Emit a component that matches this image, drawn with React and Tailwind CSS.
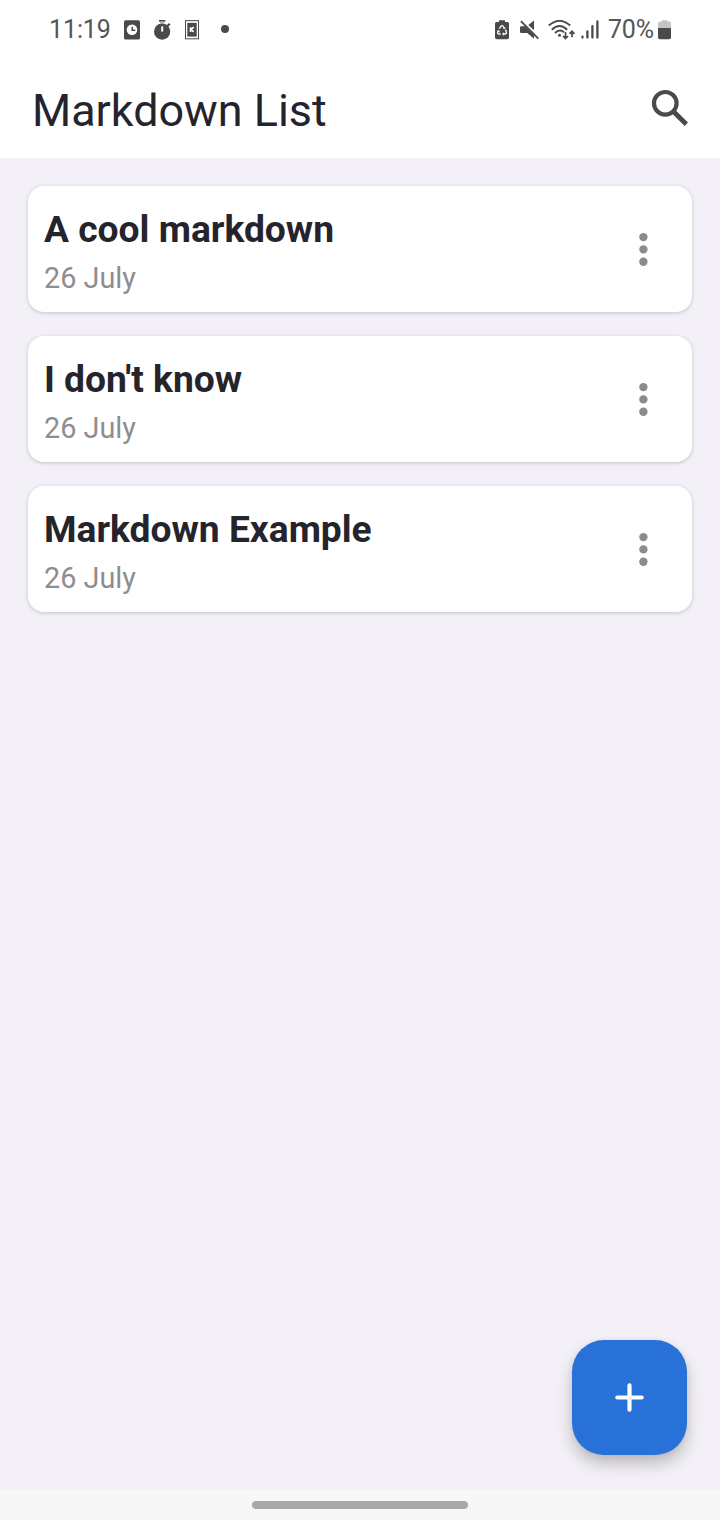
const notes = [
  { title: 'A cool markdown', date: '26 July' },
  { title: "I don't know", date: '26 July' },
  { title: 'Markdown Example', date: '26 July' },
];

function ClockCardIcon() {
  return (
    <svg className="ml-[13px] h-5 w-4 shrink-0" viewBox="0 0 16 20" fill="none">
      <rect y="0.3" width="16" height="19.2" rx="1.6" fill="#4a4a4c" />
      <circle cx="8" cy="9.8" r="5.3" fill="#fff" />
      <path d="M8.2 6.7v3.5h3.1" stroke="#4a4a4c" strokeWidth="1.5" />
    </svg>
  );
}

function StopwatchIcon() {
  return (
    <svg className="ml-[14px] h-5 w-[17px] shrink-0" viewBox="0 0 17 20" fill="none">
      <path d="M5 .8h6.4" stroke="#4a4a4c" strokeWidth="1.6" />
      <path d="M6 2.8h4.4" stroke="#a4a4a6" strokeWidth="1.2" />
      <path d="M13 6.4l2.8-2.6" stroke="#4a4a4c" strokeWidth="2.2" />
      <circle cx="8.1" cy="11.6" r="8.1" fill="#4a4a4c" />
      <path d="M8.2 6.4v5.2" stroke="#fff" strokeWidth="2" />
    </svg>
  );
}

function KCardIcon() {
  return (
    <svg className="ml-[14px] h-5 w-[14px] shrink-0" viewBox="0 0 14 20" fill="none">
      <rect x="0.5" y="0.6" width="13" height="18.2" stroke="#4a4a4c" />
      <rect x="2.3" y="2.8" width="9.4" height="13.8" fill="#4a4a4c" />
      <path d="M5.5 7.2v4.7M8.7 7.2L6 9.6l2.7 2.3" stroke="#fff" strokeWidth="1.6" />
    </svg>
  );
}

function RecycleBatteryIcon() {
  return (
    <svg className="h-5 w-[14px] shrink-0" viewBox="0 0 14 20" fill="none">
      <path d="M4 .2h6v1.7h2.4A1.6 1.6 0 0 1 14 3.5v14a1.8 1.8 0 0 1-1.8 1.8H1.8A1.8 1.8 0 0 1 0 17.5v-14a1.6 1.6 0 0 1 1.6-1.6H4z" fill="#4a4a4c" />
      <path d="M4.3 8.7L6 6.2q1-1.1 2 0l.9 1.4M10.3 9.5l1.2 2.5q.3 1.7-1.3 2H8M5.6 14H3.9q-1.7-.3-1.2-1.9l.8-1.5" stroke="#fff" strokeWidth="1.3" />
      <path d="M7.7 8.5l2.4.6.4-2.4zM8.8 12.2L7 14l1.8 1.7zM1.9 10.9l2.4-.7.6 2.3z" fill="#fff" />
    </svg>
  );
}

function MuteIcon() {
  return (
    <svg className="ml-[11px] h-5 w-[19px] shrink-0" viewBox="0 0 19 20" fill="none">
      <path d="M1.2 6.3H5.2L14 15.2v3.6L7.3 13H1.2Q0 13 0 11.8V7.5Q0 6.3 1.2 6.3z" fill="#4a4a4c" />
      <path d="M8.4 5L14 .4v9.9z" fill="#4a4a4c" />
      <path d="M.9 1.2L18.3 18.6" stroke="#4a4a4c" strokeWidth="1.9" />
    </svg>
  );
}

function WifiIcon() {
  return (
    <svg className="ml-[9px] h-5 w-7 shrink-0" viewBox="0 0 28 20" fill="none">
      <g stroke="#4a4a4c" strokeWidth="2">
        <path d="M.8 5.6Q11.5-4 22.2 5.6" />
        <path d="M3.8 9.7Q11.5 2.4 19.2 9.7" />
        <path d="M7 13Q11.5 8.6 16 12.2" />
        <path d="M17.5 12v6.6M15 16l2.5 2.6L20 16M24 17.2v-6M21.5 13.8l2.5-2.6 2.5 2.6" strokeWidth="1.7" />
      </g>
      <circle cx="11.5" cy="15.2" r="1.5" fill="#4a4a4c" />
    </svg>
  );
}

function SignalIcon() {
  return (
    <svg className="ml-[5px] h-5 w-[18px] shrink-0" viewBox="0 0 18 20" fill="none" stroke="#4a4a4c" strokeWidth="2.3" strokeLinecap="round">
      <path d="M1.5 16.7v.9M6.4 11.4v6.2M11.4 6.2v11.4M16.4 1.5v16.1" />
    </svg>
  );
}

function BatteryIcon() {
  return (
    <svg className="ml-[4px] h-5 w-[14px] shrink-0" viewBox="0 0 14 20">
      <path d="M4 .3h5.5v1.3h2.1q1.4.6 1.4 2V9H0V3.6q0-1.4 1.4-2H4z" fill="#c4c4c8" />
      <path d="M0 8h13v9.4q0 1.8-1.8 1.8H1.8Q0 19.2 0 17.4z" fill="#4a4a4c" />
    </svg>
  );
}

function StatusBar() {
  return (
    <div className="flex h-[60px] items-center justify-between pl-[49px] pr-[48px] text-[25px] leading-[30px] text-[#555557]">
      <div className="flex items-center">
        <span className="w-[62px] whitespace-nowrap tracking-[-0.1px]">11:19</span>
        <ClockCardIcon />
        <StopwatchIcon />
        <KCardIcon />
        <span className="mb-0.5 ml-[22px] size-2 rounded-full bg-[#4a4a4c]" />
      </div>
      <div className="flex items-center">
        <RecycleBatteryIcon />
        <MuteIcon />
        <WifiIcon />
        <SignalIcon />
        <span className="ml-[9px] w-[46px] whitespace-nowrap tracking-[-0.2px]">70%</span>
        <BatteryIcon />
      </div>
    </div>
  );
}

function NoteCard({ note }) {
  return (
    <article className="flex h-[126px] items-center justify-between rounded-2xl bg-white pl-4 pr-[44px] shadow-[0_1px_4px_rgba(0,0,0,0.2)]">
      <div className="pt-[9px]">
        <h2 className="whitespace-nowrap text-[37.2px] font-bold leading-[49px] text-[#25242c]">{note.title}</h2>
        <p className="text-[28.8px] leading-[48px] text-[#8e8d91]">{note.date}</p>
      </div>
      <button aria-label="Note options">
        <svg className="h-[34px] w-[9px]" viewBox="0 0 9 34" fill="#8b8a8f">
          <circle cx="4.4" cy="5.1" r="4.2" />
          <circle cx="4.4" cy="17.4" r="4.2" />
          <circle cx="4.4" cy="29.7" r="4.2" />
        </svg>
      </button>
    </article>
  );
}

export default function App() {
  return (
    <div className="flex h-[1520px] w-[720px] flex-col overflow-hidden bg-[#f3f1f7] font-['Roboto',sans-serif]">
      <header className="h-[158px] bg-white">
        <StatusBar />
        <div className="flex h-[98px] items-center justify-between pl-8 pr-[31px]">
          <h1 className="pt-1 text-[44.9px] font-normal leading-[94px] text-[#25242c]">Markdown List</h1>
          <button aria-label="Search" className="-mt-0.5">
            <svg className="size-[38px]" viewBox="0 0 38 38" fill="none" stroke="#4a4a4c">
              <circle cx="14.3" cy="14.3" r="11.3" strokeWidth="4.2" />
              <path d="M22.7 22.7L35.3 35.3" strokeWidth="4.8" />
            </svg>
          </button>
        </div>
      </header>
      <main className="flex flex-1 flex-col gap-6 px-7 pt-7">
        {notes.map((note) => <NoteCard key={note.title} note={note} />)}
        <button aria-label="Add note" className="mb-[34px] mr-[5px] mt-auto flex size-[115px] items-center justify-center self-end rounded-[32px] bg-[#2871d8] shadow-[0_9px_16px_rgba(0,0,0,0.22),0_1px_6px_rgba(0,0,0,0.06)]">
          <svg className="size-[30px]" viewBox="0 0 30 30" stroke="#fff" strokeWidth="4.2" strokeLinecap="round">
            <path d="M14.5 2.3v24.4M2.3 14.5h24.4" />
          </svg>
        </button>
      </main>
      <footer className="flex h-[31px] items-center justify-center bg-[#f7f7f8]">
        <div className="h-2 w-[216px] rounded-full bg-[#a9a9ab]" />
      </footer>
    </div>
  );
}
